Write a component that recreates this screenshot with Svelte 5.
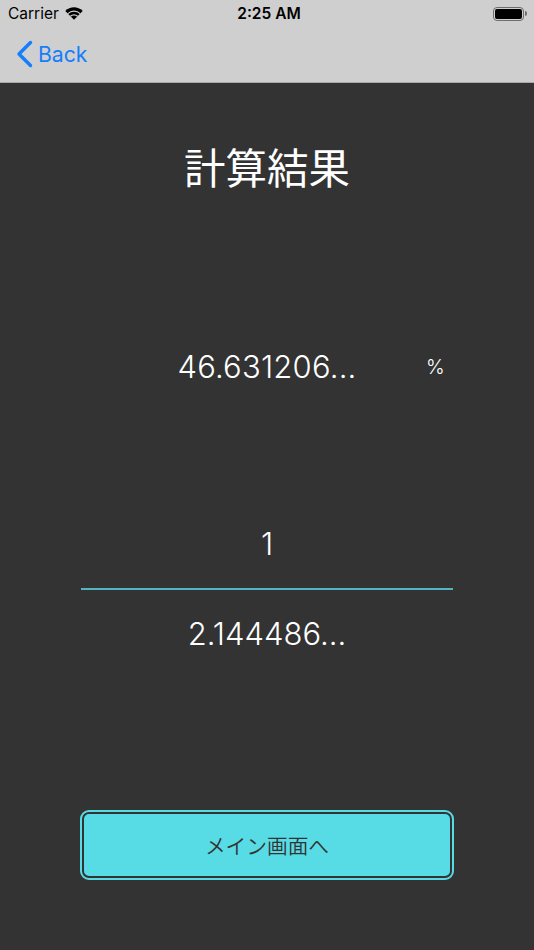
<script lang="ts">
	let percent = '46.631206...';
	let numerator = '1';
	let denominator = '2.144486...';
</script>

<div class="screen">
	<header class="nav">
		<div class="status">
			<div class="status-left">
				<span class="carrier">Carrier</span>
				<svg class="wifi" width="18" height="13" viewBox="0 0 18 13">
					<path d="M9 12.8 L0.3 3.9 C5.2 -0.9 12.8 -0.9 17.7 3.9 Z" fill="#000" />
					<path d="M2.9 6.6 C6.3 3.3 11.7 3.3 15.1 6.6" fill="none" stroke="#cfcfcf" stroke-width="1.2" />
					<path d="M5.4 9.2 C7.4 7.3 10.6 7.3 12.6 9.2" fill="none" stroke="#cfcfcf" stroke-width="1.2" />
				</svg>
			</div>
			<span class="time">2:25 AM</span>
			<div class="status-right">
				<div class="battery"><div class="level"></div></div>
				<div class="nub"></div>
			</div>
		</div>
		<a class="back" href="#back">
			<svg width="17" height="28" viewBox="0 0 17 28">
				<path d="M14.5 2.5 L3 14 L14.5 25.5" fill="none" stroke="#147efb" stroke-width="3.4" stroke-linecap="round" stroke-linejoin="round" />
			</svg>
			<span>Back</span>
		</a>
	</header>

	<main class="content">
		<h1>計算結果</h1>
		<div class="percent-row">
			<span class="percent">{percent}</span>
			<span class="unit">%</span>
		</div>
		<div class="fraction">
			<div class="num">{numerator}</div>
			<div class="line"></div>
			<div class="den">{denominator}</div>
		</div>
		<button class="main-btn">メイン画面へ</button>
	</main>
</div>

<style>
	:global(body) {
		margin: 0;
		background: #333333;
	}

	.screen {
		width: 534px;
		height: 950px;
		display: flex;
		flex-direction: column;
		overflow: hidden;
		font-family: Inter, 'Liberation Sans', 'Noto Sans CJK JP', sans-serif;
	}

	.nav {
		height: 82px;
		background: #cfcfcf;
		border-bottom: 1px solid #a9a9a9;
		flex-shrink: 0;
	}

	.status {
		height: 27px;
		display: grid;
		grid-template-columns: 1fr auto 1fr;
		align-items: center;
		color: #000;
	}
	.status-left {
		display: flex;
		align-items: center;
		gap: 6px;
		padding-left: 8px;
	}
	.carrier {
		font-size: 15.5px;
	}
	.wifi {
		margin-top: -1px;
	}
	.time {
		font-weight: 600;
		font-size: 15.5px;
		position: relative;
		left: 2px;
	}
	.status-right {
		display: flex;
		align-items: center;
		justify-content: flex-end;
		padding-right: 7px;
	}
	.battery {
		width: 31px;
		height: 14px;
		box-sizing: border-box;
		border: 1px solid #6e6e6e;
		border-radius: 4px;
		padding: 1px;
	}
	.level {
		height: 100%;
		background: #000;
		border-radius: 2px;
	}
	.nub {
		width: 2px;
		height: 5px;
		margin-left: 1px;
		background: #6e6e6e;
		border-radius: 0 2px 2px 0;
	}

	.back {
		display: flex;
		align-items: center;
		gap: 5px;
		height: 54px;
		padding-left: 16px;
		color: #147efb;
		font-size: 21.2px;
		text-decoration: none;
	}

	.content {
		flex: 1;
		display: flex;
		flex-direction: column;
		align-items: center;
		background: #333333;
		color: #fff;
	}

	h1 {
		margin: 59px 0 0;
		font-size: 41.5px;
		line-height: 54px;
		font-weight: 400;
	}

	.percent-row {
		margin-top: 151px;
		width: 372px;
		display: flex;
		justify-content: center;
		position: relative;
		font-size: 31px;
		font-weight: 350;
		letter-spacing: 0.2px;
		line-height: 40px;
	}
	.unit {
		position: absolute;
		right: 8px;
		top: 0;
		font-size: 20px;
	}

	.fraction {
		margin-top: 136px;
		width: 372px;
		text-align: center;
		font-size: 31px;
		font-weight: 350;
		line-height: 40px;
	}
	.num {
		padding-top: 1px;
	}
	.line {
		height: 2px;
		background: #53b5c2;
		margin: 24px 0 24px;
	}

	.main-btn {
		margin-top: 158px;
		width: 370px;
		height: 66px;
		box-sizing: border-box;
		background: #57dce6;
		border: 2px solid #333;
		outline: 2px solid #57dce6;
		outline-offset: 0;
		border-radius: 7px;
		color: #333;
		font-family: inherit;
		font-size: 20.7px;
		font-weight: 350;
		padding: 0;
	}
</style>
